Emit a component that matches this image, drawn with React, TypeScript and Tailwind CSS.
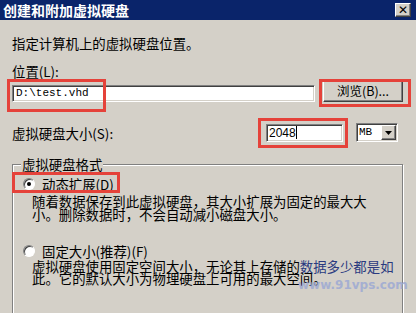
import React from "react";

const sunken =
  "border-t border-l border-t-[#808080] border-l-[#808080] border-b border-r border-b-white border-r-white shadow-[inset_1px_1px_0_#404040,inset_-1px_-1px_0_#d4d0c8]";
const raised =
  "border-t border-l border-t-white border-l-white border-b border-r border-b-[#404040] border-r-[#404040] shadow-[inset_-1px_-1px_0_#808080]";

function Radio({ checked }: { checked?: boolean }) {
  return (
    <div className="w-[12px] h-[12px] rounded-full bg-white border border-t-[#808080] border-l-[#808080] border-b-white border-r-white shadow-[inset_1px_1px_0_#404040] flex items-center justify-center shrink-0">
      {checked && <div className="w-[4px] h-[4px] rounded-full bg-black" />}
    </div>
  );
}

export default function App() {
  return (
    <div className="w-[416px] h-[313px] overflow-hidden bg-[#d4d0c8] relative text-black font-['Noto_Sans_CJK_SC',sans-serif] text-[13.4px]">
      {/* Title bar */}
      <div className="h-[20px] bg-[#0a246a] flex items-center justify-between pl-[3px] pr-[5px]">
        <span className="text-white font-bold text-[14px] leading-none">创建和附加虚拟硬盘</span>
        <div className={`w-[16px] h-[14px] bg-[#d4d0c8] ${raised} flex items-center justify-center`}>
          <span className="font-['DejaVu_Sans',sans-serif] font-bold text-[12px] leading-none">✕</span>
        </div>
      </div>

      <div className="pl-[12px] pr-[13px]">
        <div className="mt-[15px] leading-[16px]">指定计算机上的虚拟硬盘位置。</div>
        <div className="mt-[12px] leading-[16px]">位置(L):</div>

        <div className="flex items-start mt-[2px]">
          <div className={`mt-[4px] w-[303px] h-[17px] bg-white ${sunken} flex items-center pl-[3px]`}>
            <span className="font-['Liberation_Mono',monospace] text-[11px] leading-none">D:\test.vhd</span>
          </div>
          <div className={`ml-[8px] w-[80px] h-[21px] bg-[#d4d0c8] ${raised} flex items-center justify-center`}>
            <span className="leading-none text-[12.5px]">浏览(B)...</span>
          </div>
        </div>

        <div className="flex items-center mt-[21px]">
          <span className="leading-[16px]">虚拟硬盘大小(S):</span>
          <div className="flex-1" />
          <div className={`w-[77px] h-[18px] bg-white ${sunken} flex items-center pl-[2px]`}>
            <span className="font-['Liberation_Sans',sans-serif] text-[12px] leading-none">2048</span>
            <span className="w-px h-[13px] bg-black" />
          </div>
          <div className={`ml-[13px] mr-[5px] w-[42px] h-[19px] bg-white ${sunken} flex items-center justify-between`}>
            <span className="font-['Liberation_Mono',monospace] text-[11px] leading-none pl-[2px]">MB</span>
            <div className={`w-[15px] h-[15px] mr-[1px] bg-[#d4d0c8] ${raised} flex items-center justify-center`}>
              <svg width="7" height="4" viewBox="0 0 7 4">
                <polygon points="0,0 7,0 3.5,4" fill="#000" />
              </svg>
            </div>
          </div>
        </div>

        <fieldset className="mt-[14px] w-[391px] h-[200px] border border-[#808080] shadow-[inset_1px_1px_0_#fff,1px_1px_0_#fff] px-[8px]">
          <legend className="px-[1px] leading-[16px] bg-[#d4d0c8]">虚拟硬盘格式</legend>

          <div className="flex items-center mt-[4px] ml-[2px] h-[16px]">
            <Radio checked />
            <span className="ml-[7px] leading-[16px]">动态扩展(D)</span>
          </div>
          <div className="pl-[11px] mt-[3px] leading-[13px]">
            <div>随着数据保存到此虚拟硬盘，其大小扩展为固定的最大大</div>
            <div>小。删除数据时，不会自动减小磁盘大小。</div>
          </div>

          <div className="flex items-center mt-[22px] ml-[2px] h-[16px]">
            <Radio />
            <span className="ml-[7px] leading-[16px]">固定大小(推荐)(F)</span>
          </div>
          <div className="pl-[11px] mt-[1px] leading-[12px]">
            <div>
              虚拟硬盘使用固定空间大小，无论其上存储的
              <span className="text-[#2a3a80]">数据多少都是如</span>
            </div>
            <div>此。它的默认大小为物理硬盘上可用的最大空间。</div>
          </div>
        </fieldset>
      </div>

      {/* watermark */}
      <div className="absolute left-[298px] top-[279px] font-['DejaVu_Sans',sans-serif] font-bold text-[12px] leading-none text-[#9aa8d4] opacity-80">
        www.91vps.com
      </div>

      {/* red highlight boxes */}
      <div className="absolute left-[7px] top-[79px] w-[99px] h-[33px] border-[3px] border-[#e5423a]" />
      <div className="absolute left-[319px] top-[79px] w-[92px] h-[28px] border-[3px] border-[#e5423a]" />
      <div className="absolute left-[258px] top-[118px] w-[90px] h-[30px] border-[3px] border-[#e5423a]" />
      <div className="absolute left-[12px] top-[172px] w-[108px] h-[21px] border-[3px] border-[#e5423a]" />
    </div>
  );
}
